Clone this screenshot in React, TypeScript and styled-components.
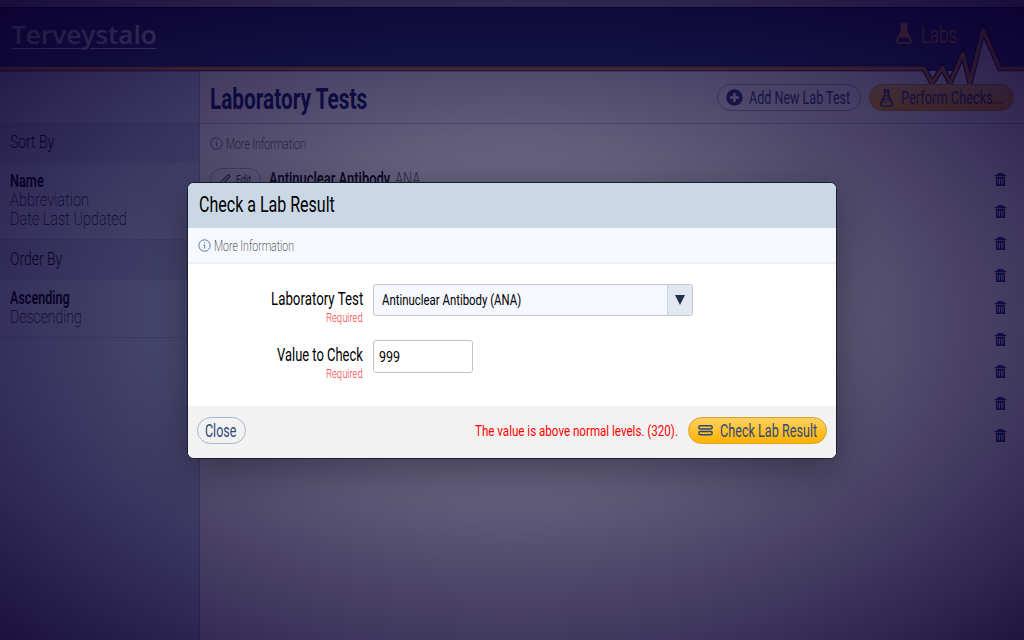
import React, { useLayoutEffect, useRef, useState } from "react";
import styled, { createGlobalStyle } from "styled-components";

const Global = createGlobalStyle`
  * { box-sizing: border-box; }
  html, body, #root { height: 100%; margin: 0; }
  body { overflow: hidden; font-family: Roboto, "Liberation Sans", sans-serif; background: #fff; }
  button { font: inherit; }
`;

interface LabelStyle { size: number; weight?: number; color?: string; lh?: number; face?: string }

const LabelBox = styled.span<{ $w: number }>`
  display: block;
  flex: none;
  width: ${p => p.$w}px;
  white-space: nowrap;
`;
const LabelInk = styled.span<{ $s: LabelStyle }>`
  display: inline-block;
  vertical-align: top;
  transform-origin: 0 50%;
  font-family: ${p => p.$s.face ?? "Roboto"}, "Liberation Sans", sans-serif;
  font-size: ${p => p.$s.size}px;
  font-weight: ${p => p.$s.weight ?? 400};
  line-height: ${p => p.$s.lh ?? 20}px;
  color: ${p => p.$s.color ?? "inherit"};
`;

/* Condensed label: squeezes its text horizontally to the given width. */
function Label({ w, children, ...s }: LabelStyle & { w: number; children: string }) {
  const ref = useRef<HTMLSpanElement>(null);
  const [k, setK] = useState(1);
  useLayoutEffect(() => {
    if (ref.current) setK(w / ref.current.offsetWidth);
  }, [w, children]);
  return (
    <LabelBox $w={w}>
      <LabelInk ref={ref} $s={s} style={{ transform: `scaleX(${k})` }}>{children}</LabelInk>
    </LabelBox>
  );
}

const Page = styled.div`
  position: relative;
  width: 1024px;
  height: 640px;
  display: flex;
  flex-direction: column;
  overflow: hidden;
`;
const TopStrip = styled.div`height: 7px; background: #a8acb8;`;
const Header = styled.header`
  position: relative;
  height: 64px;
  display: flex;
  justify-content: space-between;
  padding: 12px 67px 0 11px;
  background: linear-gradient(#182658, #264070);
  border-top: 1px solid #000030;
`;
const Brand = styled.div`
  display: flex;
  flex-direction: column;
  width: 146px;
`;
const BrandRule = styled.div`
  display: flex;
  gap: 8px;
  margin-top: -1px;
  &::before, &::after { content: ""; height: 1px; background: #e6e6f4; }
  &::before { width: 71px; }
  &::after { width: 66px; }
`;
const Section = styled.div`
  display: flex;
  align-items: flex-start;
  gap: 9px;
  padding-top: 3px;
  color: #f5a040;
`;
const Pulse = styled.svg`
  position: absolute;
  left: 0;
  top: 13px;
`;
const Body = styled.div`flex: 1; display: flex;`;
const Sidebar = styled.aside`
  width: 200px;
  background: #c8d8ec;
  border-right: 1px solid #a3b7cb;
`;
const SideSpacer = styled.div`height: 53px; border-bottom: 1px solid #abbccf;`;
const SideTitle = styled.div<{ $h: number }>`
  height: ${p => p.$h}px;
  padding: ${p => p.$h - 32}px 10px 0;
  background: #b6c6dc;
`;
const SideGroup = styled.div`
  padding: 8px 10px 11px;
  border-bottom: 1px solid #abbccf;
`;
const SideItem = styled.div`height: 19px;`;
const Main = styled.main`flex: 1; display: flex; flex-direction: column;`;
const TitleBar = styled.div`
  height: 53px;
  display: flex;
  align-items: center;
  gap: 8px;
  padding: 0 10px;
  border-bottom: 1px solid #c0cad8;
`;
const Title = styled.div`padding-top: 3px;`;
const Grow = styled.div`flex: 1;`;
const Pill = styled.button<{ $gold?: boolean; $w: number; $h?: number; $px?: number; $gap?: number }>`
  position: relative;
  display: flex;
  align-items: center;
  flex: none;
  width: ${p => p.$w}px;
  height: ${p => p.$h ?? 27}px;
  padding: 1px 0 0 ${p => p.$px ?? 8}px;
  gap: ${p => p.$gap ?? 6}px;
  border-radius: 14px;
  border: 1px solid ${p => (p.$gold ? "#d8a02c" : "#a3b8d6")};
  background: ${p => (p.$gold ? "linear-gradient(#ffd062, #ffb300)" : "transparent")};
  color: #2f4778;
`;
const InfoRow = styled.div<{ $modal?: boolean }>`
  height: ${p => (p.$modal ? 36 : 39)}px;
  display: flex;
  align-items: center;
  gap: 3px;
  padding: ${p => (p.$modal ? 2 : 0)}px 10px 0;
  color: #5f74a4;
  ${p => p.$modal && "background: #f5f8fe; border-bottom: 2px solid #edf0f7;"}
`;
const Row = styled.div`
  height: 32px;
  display: flex;
  align-items: center;
  padding: 0 18px 0 10px;
  color: #0c2468;
`;
const RowName = styled.div`display: flex; gap: 5px; padding-left: 8px;`;

const Shade = styled.div`
  position: absolute;
  inset: 0;
  display: flex;
  align-items: center;
  justify-content: center;
  background: radial-gradient(ellipse farthest-corner at center, rgba(12, 8, 50, 0.6) 0%, rgba(12, 6, 50, 0.625) 35%, rgba(12, 3, 50, 0.715) 54%, rgba(12, 2, 50, 0.79) 72%, rgba(12, 0, 48, 0.85) 86%, rgba(12, 0, 46, 0.92) 100%);
`;
const Dialog = styled.section`
  width: 650px;
  height: 277px;
  display: flex;
  flex-direction: column;
  overflow: hidden;
  border: 1px solid #1a1b30;
  border-radius: 7px;
  background: #fff;
  box-shadow: 0 10px 40px rgba(20, 18, 35, 0.5);
`;
const DialogHead = styled.div`height: 45px; padding: 6px 11px; background: #cad8e5;`;
const Form = styled.div`
  flex: 1;
  display: flex;
  flex-direction: column;
  gap: 23px;
  padding-top: 20px;
`;
const Field = styled.div`display: flex; height: 33px; gap: 10px;`;
const FieldLabel = styled.div`
  width: 175px;
  display: flex;
  flex-direction: column;
  align-items: flex-end;
  padding-top: 5px;
`;
const Select = styled.div`
  width: 320px;
  height: 32px;
  display: flex;
  align-items: center;
  justify-content: space-between;
  padding-left: 8px;
  border: 1px solid #c4c6ca;
  border-radius: 3px;
  background: #f5f8fe;
  overflow: hidden;
`;
const Arrow = styled.div`
  width: 25px;
  height: 100%;
  display: flex;
  align-items: center;
  justify-content: center;
  background: #e2e8f2;
  border-left: 1px solid #cdd5e3;
`;
const Input = styled.div`
  width: 100px;
  height: 33px;
  display: flex;
  align-items: center;
  padding: 1px 0 0 5px;
  border: 1px solid #c2c2c2;
  border-radius: 3px;
`;
const Foot = styled.footer`
  height: 52px;
  display: flex;
  align-items: flex-start;
  gap: 10px;
  padding: 11px 9px 0 9px;
  background: #f2f2f2;
`;
const Message = styled.div`padding-top: 5px;`;

const Info = () => (
  <svg width="13" height="13" viewBox="0 0 13 13" fill="none" stroke="currentColor">
    <circle cx="6.5" cy="6.5" r="5.7" />
    <path d="M5.5 5.8h1.2v3.7" />
    <path d="M6.1 3.3h1v1h-1z" fill="currentColor" stroke="none" />
  </svg>
);
const Flask = ({ w, h, bubbles }: { w: number; h: number; bubbles?: boolean }) => (
  <svg width={w} height={h} viewBox="0 0 16 21" fill="none" stroke="currentColor" strokeWidth="1.7">
    <path d="M4.5 1h7M5.8 1.5v6.3L1.3 16.5c-.9 2 .1 3.5 1.9 3.5h9.6c1.8 0 2.8-1.5 1.9-3.5L10.2 7.8V1.5" />
    {bubbles
      ? <path d="M6 3.5h4M6 8h4M4.5 12h3M8.5 10.5h2M9 13.5h2.5M3.5 15h4" />
      : <path d="M5.8 2h4.4v5.8l3.4 6.2c-2 2.3-3.5-.6-6 .2-2 1-3.5.8-4.4-.6l2.6-5.8z" fill="currentColor" stroke="none" />}
  </svg>
);
const Plus = () => (
  <svg width="17" height="17" viewBox="0 0 17 17">
    <circle cx="8.5" cy="8.5" r="8.3" fill="currentColor" />
    <path d="M8.5 4v9M4 8.5h9" stroke="#fff" strokeWidth="2.4" />
  </svg>
);
const Pencil = () => (
  <svg width="12" height="12" viewBox="0 0 12 12" fill="none" stroke="currentColor" strokeWidth="1.2">
    <path d="M.8 11.2l1-3L8.7 1.3q.9-.8 1.7 0 .8.9 0 1.7L3.7 10.1z" />
  </svg>
);
const Trash = () => (
  <svg width="11" height="13" viewBox="0 0 11 13" fill="none" stroke="currentColor" strokeWidth="1.5">
    <path d="M0 2.5h11M3.5 2V.7h4V2" />
    <path d="M1.7 4.6h7.6v7.6H1.7z" />
    <path d="M3.7 5v7M5.5 5v7M7.3 5v7" strokeWidth="1" />
  </svg>
);
const Bars = () => (
  <svg width="15" height="11" viewBox="0 0 15 11" fill="none" stroke="currentColor" strokeWidth="1.5">
    <rect x=".8" y=".8" width="13.4" height="3.2" rx="1.6" />
    <rect x=".8" y="6.5" width="13.4" height="3.2" rx="1.6" />
  </svg>
);

const More = () => <Label w={80} size={14} weight={200} color="#222">More Information</Label>;
const rows = [0, 1, 2, 3, 4, 5, 6, 7, 8];
const wave = "M-5 47.5H924L932 62L942.5 46.5L950 62L963 32.5L970 62L983 9L1000 47.5H1030";

export default function App() {
  return (
    <Page>
      <Global />
      <TopStrip />
      <Header>
        <Brand>
          <Label w={146} size={26} weight={600} face="'Open Sans'" color="#d8d8ea" lh={29}>Terveystalo</Label>
          <BrandRule />
        </Brand>
        <Section>
          <Flask w={16} h={21} />
          <Label w={36} size={24} weight={300} lh={25}>Labs</Label>
        </Section>
        <Pulse width="1024" height="70" viewBox="0 0 1024 70">
          <path d="M924 49L932 63L942 48L950 63L963 34L970 63L983 10L999 48V70H924z" fill="#fff" />
          <path d={wave} fill="none" stroke="#000048" strokeWidth="5.6" />
          <path d={wave} fill="none" stroke="#d88a28" strokeWidth="3.8" strokeLinejoin="round" />
        </Pulse>
      </Header>
      <Body>
        <Sidebar>
          <SideSpacer />
          <SideTitle $h={39}><Label w={44} size={19} weight={300} lh={21}>Sort By</Label></SideTitle>
          <SideGroup>
            <SideItem><Label w={34} size={18} weight={600}>Name</Label></SideItem>
            <SideItem><Label w={79} size={18} weight={200} color="#111">Abbreviation</Label></SideItem>
            <SideItem><Label w={117} size={18} weight={200} color="#111">Date Last Updated</Label></SideItem>
          </SideGroup>
          <SideTitle $h={40}><Label w={52} size={19} weight={300} lh={21}>Order By</Label></SideTitle>
          <SideGroup>
            <SideItem><Label w={60} size={18} weight={600}>Ascending</Label></SideItem>
            <SideItem><Label w={72} size={18} weight={200} color="#111">Descending</Label></SideItem>
          </SideGroup>
        </Sidebar>
        <Main>
          <TitleBar>
            <Title><Label w={157} size={29} weight={700} color="#0c2468" lh={32}>Laboratory Tests</Label></Title>
            <Grow />
            <Pill $w={144}><Plus /><Label w={101} size={18.5}>Add New Lab Test</Label></Pill>
            <Pill $gold $w={145} $px={9} $gap={7}><Flask w={15} h={18} bubbles /><Label w={102} size={18.5}>Perform Checks...</Label></Pill>
          </TitleBar>
          <InfoRow><Info /><More /></InfoRow>
          {rows.map(i => (
            <Row key={i}>
              {i === 0 && (
                <>
                  <Pill $w={51} $h={23} $gap={5}><Pencil /><Label w={15} size={12.5}>Edit</Label></Pill>
                  <RowName>
                    <Label w={121} size={18} weight={500} color="#000">Antinuclear Antibody</Label>
                    <Label w={25} size={18} weight={300} color="#555">ANA</Label>
                  </RowName>
                </>
              )}
              <Grow />
              <Trash />
            </Row>
          ))}
        </Main>
      </Body>
      <Shade>
        <Dialog>
          <DialogHead><Label w={136} size={22.5} weight={400} lh={30}>Check a Lab Result</Label></DialogHead>
          <InfoRow $modal><Info /><More /></InfoRow>
          <Form>
            <Field>
              <FieldLabel>
                <Label w={92} size={18.5}>Laboratory Test</Label>
                <Label w={37} size={13} weight={300} color="#f33" lh={17}>Required</Label>
              </FieldLabel>
              <Select>
                <Label w={139} size={15}>Antinuclear Antibody (ANA)</Label>
                <Arrow><svg width="10" height="10" viewBox="0 0 10 10"><path d="M0 0h10L5 10z" fill="#203450" /></svg></Arrow>
              </Select>
            </Field>
            <Field>
              <FieldLabel>
                <Label w={86} size={18.5}>Value to Check</Label>
                <Label w={37} size={13} weight={300} color="#f33" lh={17}>Required</Label>
              </FieldLabel>
              <Input><Label w={21} size={15.5}>999</Label></Input>
            </Field>
          </Form>
          <Foot>
            <Pill $w={49} $px={7}><Label w={31} size={18.5}>Close</Label></Pill>
            <Grow />
            <Message><Label w={203} size={14.5} color="#f00">The value is above normal levels. (320).</Label></Message>
            <Pill $gold $w={139} $px={9} $gap={7}><Bars /><Label w={97} size={18.5}>Check Lab Result</Label></Pill>
          </Foot>
        </Dialog>
      </Shade>
    </Page>
  );
}
